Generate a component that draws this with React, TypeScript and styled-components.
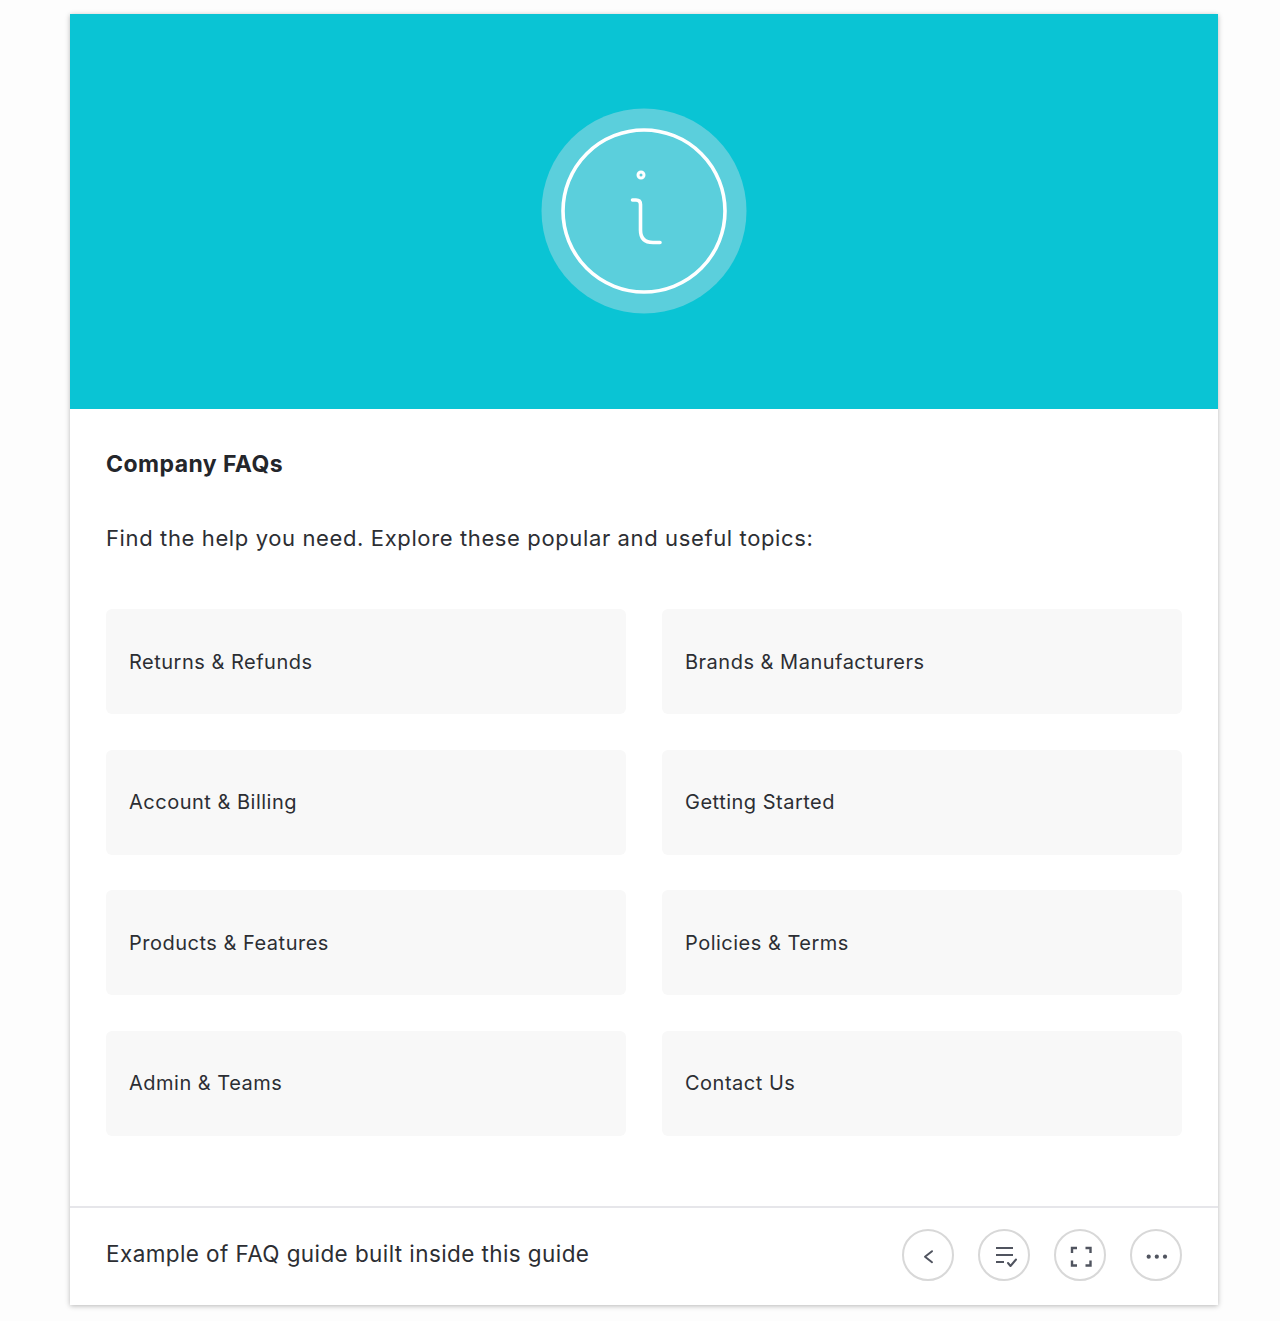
import React from "react";
import styled, { createGlobalStyle } from "styled-components";

const Global = createGlobalStyle`
  html, body { margin: 0; padding: 0; background: #fff; }
  body { font-family: Inter, "Liberation Sans", sans-serif; color: #24262b; }
`;

const Page = styled.div`
  width: 1280px;
  height: 1321px;
  box-sizing: border-box;
  padding: 14px 62px 16px 70px;
  background: #fdfdfd;
`;

const Card = styled.main`
  width: 1148px;
  height: 1291px;
  background: #fff;
  display: flex;
  flex-direction: column;
  box-shadow: 0 1px 5px rgba(0, 0, 0, 0.28);
`;

const Hero = styled.header`
  height: 395px;
  flex: none;
  box-sizing: border-box;
  padding-bottom: 2px;
  background: #0ac4d4;
  display: flex;
  align-items: center;
  justify-content: center;
`;

const Body = styled.section`
  flex: 1;
  padding: 41px 36px 0;
`;

const Title = styled.h1`
  margin: 0;
  font-size: 23px;
  line-height: 28px;
  font-weight: 700;
  color: #24262b;
  letter-spacing: 0.45px;
`;

const Lead = styled.p`
  margin: 45px 0 0;
  font-size: 22px;
  line-height: 30px;
  font-weight: 400;
  color: #2c2e33;
  letter-spacing: 0.62px;
`;

const Topics = styled.div`
  margin-top: 56px;
  display: grid;
  grid-template-columns: 520px 520px;
  column-gap: 36px;
  row-gap: 35.5px;
`;

const Topic = styled.a`
  height: 105px;
  box-sizing: border-box;
  padding: 0 23px;
  display: flex;
  align-items: center;
  background: #f8f8f8;
  border-radius: 6px;
  font-size: 20px;
  color: #2c2e33;
  letter-spacing: 0.5px;
`;

const Footer = styled.footer`
  height: 99px;
  flex: none;
  box-sizing: border-box;
  border-top: 2px solid #e6e6ea;
  padding: 0 36px;
  display: flex;
  align-items: center;
  justify-content: space-between;
`;

const Caption = styled.span`
  font-size: 22.5px;
  color: #2c2e33;
  letter-spacing: 0.41px;
  position: relative;
  top: -3px;
`;

const Actions = styled.div`
  display: flex;
  gap: 24px;
  position: relative;
  top: -2px;
`;

const Round = styled.button`
  width: 52px;
  height: 52px;
  padding: 0;
  box-sizing: border-box;
  border: 2px solid #d8d8d8;
  border-radius: 50%;
  background: #fff;
  display: flex;
  align-items: center;
  justify-content: center;
`;

const InfoMark = () => (
  <svg width="206" height="206" viewBox="0 0 206 206" aria-hidden="true">
    <circle cx="103" cy="103" r="102.5" fill="#5bcfdc" />
    <circle cx="103" cy="103" r="81" fill="none" stroke="#fff" strokeWidth="3.6" />
    <circle cx="100" cy="67" r="3" fill="none" stroke="#fff" strokeWidth="3" />
    <path
      d="M91.5 92 H95 Q99.5 92 99.5 96.5 V122 Q99.5 134.5 112 134.5 H119"
      fill="none"
      stroke="#fff"
      strokeWidth="3.6"
      strokeLinecap="round"
    />
  </svg>
);

const BackIcon = () => (
  <svg width="24" height="24" viewBox="0 0 24 24" fill="none" stroke="#50545f" strokeWidth="2" aria-hidden="true">
    <path d="M16 8.2 L9 13.7 L16 19.2" strokeLinecap="round" strokeLinejoin="round" />
  </svg>
);

const ListIcon = () => (
  <svg width="26" height="26" viewBox="0 0 26 26" fill="none" stroke="#50545f" strokeWidth="2" aria-hidden="true">
    <path d="M5 6 H22 M5 13 H22 M5 20 H13" />
    <path d="M17 21 L19.5 24 L25 17.5" strokeLinecap="round" strokeLinejoin="round" />
  </svg>
);

const ExpandIcon = () => (
  <svg width="24" height="24" viewBox="0 0 24 24" fill="none" stroke="#50545f" strokeWidth="2.4" aria-hidden="true">
    <path d="M4 10 V5 H9 M17.5 5 H22.5 V10 M22.5 17.5 V22.5 H17.5 M9 22.5 H4 V17.5" />
  </svg>
);

const MoreIcon = () => (
  <svg width="24" height="24" viewBox="0 0 24 24" fill="#50545f" aria-hidden="true">
    <circle cx="4.7" cy="13.7" r="2.1" />
    <circle cx="12.8" cy="13.7" r="2.1" />
    <circle cx="21" cy="13.7" r="2.1" />
  </svg>
);

const topics = [
  "Returns & Refunds",
  "Brands & Manufacturers",
  "Account & Billing",
  "Getting Started",
  "Products & Features",
  "Policies & Terms",
  "Admin & Teams",
  "Contact Us",
];

export default function App() {
  return (
    <>
      <Global />
      <Page>
        <Card>
          <Hero>
            <InfoMark />
          </Hero>
          <Body>
            <Title>Company FAQs</Title>
            <Lead>Find the help you need. Explore these popular and useful topics:</Lead>
            <Topics>
              {topics.map((t) => (
                <Topic key={t}>{t}</Topic>
              ))}
            </Topics>
          </Body>
          <Footer>
            <Caption>Example of FAQ guide built inside this guide</Caption>
            <Actions>
              <Round aria-label="Back"><BackIcon /></Round>
              <Round aria-label="Checklist"><ListIcon /></Round>
              <Round aria-label="Fullscreen"><ExpandIcon /></Round>
              <Round aria-label="More"><MoreIcon /></Round>
            </Actions>
          </Footer>
        </Card>
      </Page>
    </>
  );
}
